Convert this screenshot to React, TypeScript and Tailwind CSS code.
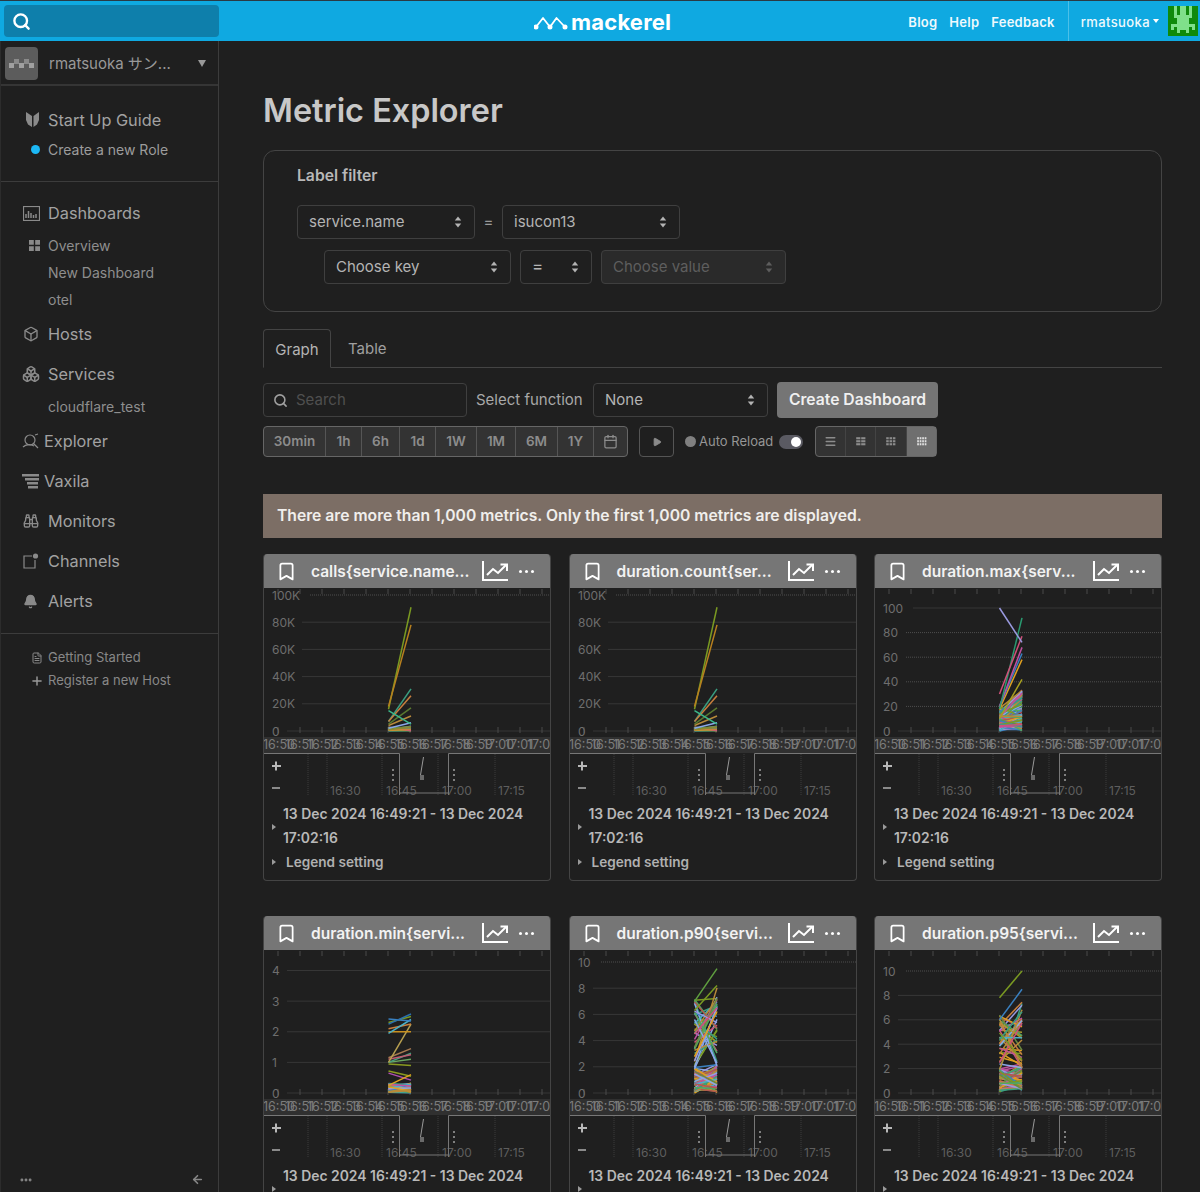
import { Search, Box, Boxes, Binoculars, Bell, Plus, FileText, Calendar, Play, Bookmark, Ellipsis, ArrowLeft, Menu } from "lucide-react"
import type { ReactNode } from "react"

type Line = [number, number, string]

const palette = ["#3a9e80", "#c87f3e", "#7a9a22", "#b88a3a", "#8aa8e8", "#a89a30", "#d0507a", "#3a80c0", "#c050a0", "#e0a020", "#4ab0c8", "#6a8a40", "#b05a50", "#9a9ae0", "#50a860"]

// small seeded generator so the charts look the same on every load
function band(seed: number, count: number, lowMax: number, highMax: number, lowMin = 0, highMin = 0): Line[] {
  let s = seed
  const next = () => {
    s = (s * 1103515245 + 12345) % 2147483648
    return s / 2147483648
  }
  const out: Line[] = []
  for (let i = 0; i < count; i++) {
    next()
    const low = lowMin + next() * (lowMax - lowMin)
    const high = highMin + next() * (highMax - highMin)
    out.push([low, high, palette[Math.floor(next() * palette.length)]])
  }
  return out
}

const callsLines: Line[] = [
  ...band(5, 16, 3, 4),
  [1, 3, "#8a8a30"],
  [2, 6, "#8aa8e8"],
  [4, 11, "#b88a3a"],
  [5, 17, "#5a7a30"],
  [7, 31, "#3a9e80"],
  [7, 26, "#c87f3e"],
  [15, 5, "#3cb88a"],
  [16, 91, "#7a9a22"],
  [18, 78, "#b8801f"],
]

const maxLines: Line[] = [
  ...band(7, 60, 20, 36),
  ...band(9, 50, 12, 14),
  [10, 42, "#a8a020"],
  [18, 58, "#e0a020"],
  [20, 63, "#3a80c0"],
  [20, 68, "#c050a0"],
  [18, 92, "#2a9a70"],
  [30, 77, "#d0507a"],
  [100, 72, "#9a9ae0"],
]

const minLines: Line[] = [
  ...band(11, 45, 0.32, 0.32),
  [0.72, 0.55, "#8a9a20"],
  [0.65, 0.42, "#b050b0"],
  [0.25, 0.6, "#e0a020"],
  [0.95, 0.9, "#8a9a20"],
  [1.0, 1.1, "#6aa860"],
  [1.0, 1.3, "#4aa080"],
  [1.1, 1.25, "#c05a70"],
  [1.15, 1.45, "#a87a50"],
  [1.0, 2.25, "#b8a050"],
  [2.0, 2.0, "#c89020"],
  [2.1, 2.25, "#c87f3e"],
  [1.95, 2.4, "#4ab0c8"],
  [2.3, 2.5, "#7a9a22"],
  [2.42, 2.35, "#3a80c0"],
  [2.25, 2.58, "#2a70b0"],
]

const p90Lines: Line[] = [
  ...band(23, 60, 2, 2.2),
  ...band(31, 34, 7.2, 8.2, 1.8, 2),
  [4.5, 6.5, "#d0507a"],
  [6.3, 8.2, "#7a9a22"],
  [7, 9.5, "#60a040"],
]

const p95Lines: Line[] = [
  ...band(41, 60, 2, 2.4),
  ...band(53, 34, 6.4, 7.6, 1.8, 2),
  [6, 8.5, "#3a80c0"],
  [7.8, 10, "#7a9a22"],
]

const cards = [
  { title: "calls{service.name...", ticks: ["100K", "80K", "60K", "40K", "20K", "0"], top: 7, scale: 100, lines: callsLines },
  { title: "duration.count{ser...", ticks: ["100K", "80K", "60K", "40K", "20K", "0"], top: 7, scale: 100, lines: callsLines },
  { title: "duration.max{serv...", ticks: ["100", "80", "60", "40", "20", "0"], top: 20, scale: 100, lines: maxLines },
  { title: "duration.min{servi...", ticks: ["4", "3", "2", "1", "0"], top: 20.5, scale: 4, lines: minLines },
  { title: "duration.p90{servi...", ticks: ["10", "8", "6", "4", "2", "0"], top: 12, scale: 10, lines: p90Lines },
  { title: "duration.p95{servi...", ticks: ["10", "8", "6", "4", "2", "0"], top: 21, scale: 10, lines: p95Lines },
]

const axisLabels = ["16:50", "16:51", "16:52", "16:53", "16:54", "16:55", "16:56", "16:57", "16:58", "16:59", "17:00", "17:01", "17:02"]

function UpDown({ className = "" }: { className?: string }) {
  return (
    <svg width="8" height="12" viewBox="0 0 8 12" className={className} fill="currentColor">
      <path d="M4 0.5 7.2 4.6H0.8Z" />
      <path d="M4 11.5 0.8 7.4H7.2Z" />
    </svg>
  )
}

function Select({ label, className = "", disabled = false }: { label: string; className?: string; disabled?: boolean }) {
  return (
    <div className={`flex items-center justify-between h-[34px] pl-[11px] pr-3 rounded border border-[#3f3f3f] text-[15px] ${disabled ? "bg-[#2a2a2a] text-[#5e5e5e]" : "text-[#b4b4b4]"} ${className}`}>
      <span>{label}</span>
      <UpDown className={disabled ? "text-[#5e5e5e]" : "text-[#b4b4b4]"} />
    </div>
  )
}

function DotGrid({ cols, rows }: { cols: number; rows: number }) {
  const cells = []
  for (let y = 0; y < rows; y++) {
    for (let x = 0; x < cols; x++) {
      const w = 10 / cols
      const h = 9 / rows
      cells.push(<rect key={`${x}-${y}`} x={x * w + 0.2} y={y * h + 0.2} width={w - 0.8} height={h - 0.9} />)
    }
  }
  return (
    <svg width="10" height="9" viewBox="0 0 10 9" fill="currentColor">
      {cells}
    </svg>
  )
}

function DotGridBig() {
  return (
    <svg width="11" height="11" viewBox="0 0 11 11" fill="#8a8a8a">
      <path d="M0 0h4.800v4.800H0ZM6.200 0H11v4.800H6.200ZM0 6.200h4.800V11H0ZM6.200 6.200H11V11H6.200Z" />
    </svg>
  )
}

function NavItem({ icon, label, iconBox = "w-[47px] pl-[22px]" }: { icon: ReactNode; label: string; iconBox?: string }) {
  return (
    <div className="flex items-center h-[24px] text-[16.3px] text-[#a2a2a2]">
      <div className={`${iconBox} shrink-0 flex items-center`}>{icon}</div>
      <span>{label}</span>
    </div>
  )
}

function SubItem({ label }: { label: string }) {
  return <div className="h-[27px] flex items-center pl-[47px] text-[14px] text-[#8e8e8e]">{label}</div>
}

function Chart({ ticks, top, scale, lines }: { ticks: string[]; top: number; scale: number; lines: Line[] }) {
  const base = 143
  const step = (base - top) / (ticks.length - 1)
  const yOf = (v: number) => base - (v / scale) * (base - top)
  const xTicks = Array.from({ length: 13 }, (_, i) => 15 + i * 22)
  return (
    <svg width="288" height="210" viewBox="0 0 288 210" className="block">
      {xTicks.map((x) => (
        <g key={x} stroke="#4a4a4a">
          <line x1={x} x2={x} y1={1} y2={6} />
          <line x1={x} x2={x} y1={base - 4} y2={base + 2} />
        </g>
      ))}
      {ticks.map((t, i) => {
        const y = top + i * step
        return (
          <g key={t}>
            <line x1={17 + t.length * 7.5} x2={287} y1={y} y2={y} stroke="#4e4e4e" strokeDasharray="1 1" />
            <text x={9} y={y + 4.5} fontSize="12" fill="#6e6e6e">
              {t}
            </text>
          </g>
        )
      })}
      {lines.map((l, i) => (
        <line key={i} x1={125.5} x2={148} y1={yOf(l[0])} y2={yOf(l[1])} stroke={l[2]} strokeWidth="1.5" />
      ))}
      <rect x="0.5" y="149" width="287" height="16" fill="#303030" />
      {axisLabels.map((t, i) => (
        <text key={t} x={i * 22} y={160.5} fontSize="12.5" fill="#7c7c7c">
          {t}
        </text>
      ))}
      <path d="M0.5 0V165.5H136.5M185.5 165.5H287.5V0" fill="none" stroke="#777" />
      {/* range navigator under the chart */}
      <path d="M9 178h9M13 173.5v9" stroke="#b8b8b8" strokeWidth="2" />
      <path d="M9 200h8" stroke="#8a8a8a" strokeWidth="2" />
      {[45, 64, 119, 175, 232].map((x) => (
        <line key={x} x1={x} x2={x} y1={166} y2={207} stroke="#3c3c3c" strokeDasharray="1 1" />
      ))}
      <text x="67" y="206.500" fontSize="12" fill="#5e5e5e">16:30</text>
      <text x="123" y="206.500" fontSize="12" fill="#5e5e5e">16:45</text>
      <text x="179" y="206.500" fontSize="12" fill="#5e5e5e">17:00</text>
      <text x="235" y="206.500" fontSize="12" fill="#5e5e5e">17:15</text>
      <path d="M136.500 165.500V207M185.500 165.500V207M136.500 205H185.500" stroke="#777" fill="none" />
      <path d="M160.500 169 157.500 187" stroke="#9a9a9a" fill="none" strokeWidth="1" />
      <rect x="157" y="187" width="4" height="5" fill="#6a6a6a" />
      <g fill="#a0a0a0">
        <circle cx="130" cy="182" r="1" />
        <circle cx="130" cy="187" r="1" />
        <circle cx="130" cy="192" r="1" />
        <circle cx="191" cy="182" r="1" />
        <circle cx="191" cy="187" r="1" />
        <circle cx="191" cy="192" r="1" />
      </g>
    </svg>
  )
}

function MetricCard({ card }: { card: (typeof cards)[number] }) {
  return (
    <div className="h-[327px] rounded border border-[#444] border-t-0 overflow-hidden">
      <div className="h-[34px] bg-[#767676] flex items-center text-white -mx-px">
        <Bookmark size={21} strokeWidth={2} className="ml-[13px] shrink-0" />
        <span className="ml-[14px] pt-px w-[170px] shrink-0 whitespace-nowrap text-[15.5px] font-semibold text-[#f2f2f2]">{card.title}</span>
        <svg width="27" height="22" viewBox="0 0 27 22" fill="none" stroke="white" strokeWidth="2" className="ml-px shrink-0">
          <path d="M1 1v19h25" />
          <path d="M5 15l6-6 5 4 8-8" />
          <path d="M18.500 4.500H25V11" />
        </svg>
        <div className="ml-[10px] flex gap-[3px]">
          <span className="w-[3px] h-[3px] rounded-full bg-white" />
          <span className="w-[3px] h-[3px] rounded-full bg-white" />
          <span className="w-[3px] h-[3px] rounded-full bg-white" />
        </div>
      </div>
      <div className="-mx-px">
        <Chart ticks={card.ticks} top={card.top} scale={card.scale} lines={card.lines} />
      </div>
      <div className="flex items-center mt-[5px] pl-[8px]">
        <span className="w-0 h-0 border-y-[3px] border-y-transparent border-l-[4px] border-l-[#9a9a9a] shrink-0" />
        <div className="pl-[7px] pr-3 text-[13.9px] leading-[23.5px] font-semibold text-[#b8b8b8]">13 Dec 2024 16:49:21 - 13 Dec 2024 17:02:16</div>
      </div>
      <div className="flex items-center pl-[8px] h-[24px]">
        <span className="w-0 h-0 border-y-[3px] border-y-transparent border-l-[4px] border-l-[#9a9a9a]" />
        <span className="ml-[10px] text-[13.6px] font-semibold text-[#b0b0b0]">Legend setting</span>
      </div>
    </div>
  )
}

export default function App() {
  return (
    <div className="h-[1192px] overflow-hidden flex flex-col bg-[#1f1f1f] font-['Inter',sans-serif]">
      <header className="h-[41px] shrink-0 bg-[#0fa9e1] border-t border-[#2a3a44] flex items-center relative">
        <div className="absolute left-[4px] top-[4px] w-[215px] h-[32px] rounded bg-[#0e7fab] flex items-center pl-[8px]">
          <Search size={19} strokeWidth={3} className="text-white" />
        </div>
        <div className="absolute left-[534px] top-[8px] flex items-center">
          <svg width="36" height="16" viewBox="0 0 36 16" fill="none" stroke="white" strokeWidth="1.8" strokeLinejoin="round">
            <path d="M2 13 9 4l7 9 6.5-9L31 13" />
            <circle cx="2" cy="13" r="1.6" fill="white" />
            <circle cx="16" cy="13" r="1.6" fill="white" />
            <circle cx="31" cy="13" r="1.6" fill="white" />
          </svg>
          <span className="ml-[1px] text-[22px] leading-[26px] font-bold text-white tracking-[0.2px]">mackerel</span>
        </div>
        <nav className="ml-auto flex items-center h-full text-[13px] font-semibold text-[#eef9fd] tracking-[0.25px]">
          <span className="pt-[3px]">Blog</span>
          <span className="ml-[12px] pt-[3px]">Help</span>
          <span className="ml-[12px] pt-[3px]">Feedback</span>
          <div className="ml-[13px] h-full border-l border-[#4cc0e8] flex items-center pl-[12px] pr-[2px]">
            <span className="pt-[4px] font-medium tracking-[0.4px]">rmatsuoka</span>
            <span className="ml-[3px] w-0 h-0 border-x-[3px] border-x-transparent border-t-[4px] border-t-white" />
            <svg width="30" height="30" viewBox="0 0 10 10" className="ml-[9px]" shapeRendering="crispEdges">
              <rect width="10" height="10" fill="#0f8a0b" />
              <path d="M2 0h1v3h1V0h2v3h1V0h1v4H7v2h2v2H8V7H7v2H6V8H4v1H3V7H2v1H1V6h2V4H2Z" fill="#7fe08a" />
            </svg>
          </div>
        </nav>
      </header>

      <div className="flex flex-1 min-h-0">
        <aside className="w-[219px] shrink-0 border-r border-[#3c3c3c] border-l border-l-[#2c2c2c] flex flex-col">
          <div className="h-[45px] shrink-0 border-b-2 border-[#353535] flex items-center pt-[2px] pl-[4px] pr-[12px]">
            <svg width="33" height="33" viewBox="0 0 33 33" className="shrink-0 rounded-sm">
              <rect width="33" height="33" fill="#5c5c5c" />
              <path d="M4 16h5v5H4ZM14 16h5v5h-5ZM24 16h5v5h-5Z" fill="#a0a0a0" />
              <path d="M9 12h5v5H9ZM19 12h5v5h-5Z" fill="#8a8a8a" />
            </svg>
            <span className="ml-[11px] pt-[2px] text-[15px] text-[#999] whitespace-nowrap font-['Inter','Noto_Sans_CJK_JP',sans-serif]">rmatsuoka サン...</span>
            <span className="ml-auto w-0 h-0 border-x-[4px] border-x-transparent border-t-[7px] border-t-[#999]" />
          </div>

          <div className="h-[96px] shrink-0 border-b border-[#3c3c3c] pt-[22px]">
            <NavItem
              label="Start Up Guide"
              icon={
                <svg width="15" height="18" viewBox="0 0 15 18" className="ml-[2px]" fill="#8a8a8a">
                  <path d="M1 1 7 5v11L3 13.5 1 9ZM14 1 8.5 5v11l3.5-2.5L14 9Z" />
                </svg>
              }
            />
            <div className="flex items-center h-[27px] mt-[4px] pl-[30px] text-[14px] text-[#9c9c9c]">
              <span className="w-[9px] h-[9px] rounded-full bg-[#1cb8f5]" />
              <span className="ml-[8px]">Create a new Role</span>
            </div>
          </div>

          <div className="pt-[19px] h-[452px] shrink-0 border-b border-[#3c3c3c] flex flex-col">
            <NavItem
              label="Dashboards"
              icon={
                <svg width="17" height="15" viewBox="0 0 17 15" fill="none" stroke="#8a8a8a">
                  <rect x="0.5" y="0.5" width="16" height="14" strokeWidth="1.2" />
                  <path d="M3 12V8M5.500 12V5M8 12V7M10.500 12V9M13 12V8" strokeWidth="1.5" />
                </svg>
              }
            />
            <div className="h-[7px]" />
            <div className="h-[27px] flex items-center pl-[28px] text-[14px] text-[#8e8e8e]">
              <DotGridBig />
              <span className="ml-[8px]">Overview</span>
            </div>
            <SubItem label="New Dashboard" />
            <SubItem label="otel" />
            <div className="h-[9px]" />
            <NavItem label="Hosts" icon={<Box size={16} className="text-[#8a8a8a]" />} />
            <div className="h-[16px]" />
            <NavItem label="Services" icon={<Boxes size={18} className="text-[#8a8a8a] -ml-px" />} />
            <div className="h-[7px]" />
            <SubItem label="cloudflare_test" />
            <div className="h-[9px]" />
            <NavItem
              iconBox="w-[43px] pl-[21px]"
              label="Explorer"
              icon={
                <svg width="17" height="17" viewBox="0 0 17 17" fill="none" stroke="#8a8a8a" strokeWidth="1.2">
                  <circle cx="8" cy="7" r="5" />
                  <path d="M11.500 10.500 16 15M1 14c3-3 8-3 11-1M13 2l3-1" />
                </svg>
              }
            />
            <div className="h-[16px]" />
            <NavItem
              iconBox="w-[43px] pl-[21px]"
              label="Vaxila"
              icon={
                <svg width="17" height="15" viewBox="0 0 17 15" fill="#8a8a8a">
                  <path d="M0 0h17v2.500H0ZM3 4h14v2.500H3ZM5 8h11v2.500H5ZM6 12h10v2.500H6Z" />
                </svg>
              }
            />
            <div className="h-[16px]" />
            <NavItem label="Monitors" icon={<Binoculars size={16} className="text-[#8a8a8a]" />} />
            <div className="h-[16px]" />
            <NavItem
              label="Channels"
              icon={
                <svg width="16" height="16" viewBox="0 0 16 16" fill="none" stroke="#8a8a8a" strokeWidth="1.2">
                  <path d="M9 3H1v12h11V7" />
                  <circle cx="12.500" cy="3" r="2.600" fill="#8a8a8a" stroke="none" />
                </svg>
              }
            />
            <div className="h-[16px]" />
            <NavItem label="Alerts" icon={<Bell size={15} fill="#8a8a8a" className="text-[#8a8a8a]" />} />
          </div>

          <div className="pt-[12px] pl-[29px] text-[13px] text-[#888]">
            <div className="flex items-center h-[23px]">
              <FileText size={12} className="ml-px" />
              <span className="ml-[5px]">Getting Started</span>
            </div>
            <div className="flex items-center h-[23px]">
              <Plus size={14} strokeWidth={2.5} className="text-[#999]" />
              <span className="ml-[4px]">Register a new Host</span>
            </div>
          </div>

          <div className="mt-auto h-[19px] flex items-start justify-between pl-[18px] pr-[14px] text-[#888]">
            <Ellipsis size={14} strokeWidth={3} />
            <ArrowLeft size={13} strokeWidth={3} />
          </div>
        </aside>

        <main className="flex-1 min-w-0 overflow-hidden pl-[44px] pr-[38px]">
          <h1 className="mt-[49px] h-[42px] leading-[42px] text-[32.4px] font-semibold text-[#c8c8c8]">Metric Explorer</h1>

          <section className="mt-[18px] h-[162px] rounded-xl border border-[#444] pl-[33px] pt-[16px]">
            <div className="text-[15.7px] leading-[18px] font-semibold text-[#b8b8b8]">Label filter</div>
            <div className="mt-[20px] flex items-center">
              <Select label="service.name" className="w-[178px]" />
              <span className="w-[27px] text-center text-[15px] text-[#999]">=</span>
              <Select label="isucon13" className="w-[178px]" />
            </div>
            <div className="mt-[11px] ml-[27px] flex items-center gap-[9px]">
              <Select label="Choose key" className="w-[187px]" />
              <Select label="=" className="w-[72px] text-[17px]" />
              <Select label="Choose value" className="w-[185px]" disabled />
            </div>
          </section>

          <div className="mt-[17px] h-[39px] border-b border-[#444] flex">
            <div className="w-[68px] h-[39px] pt-[3px] flex items-center justify-center text-[15px] text-[#b4b4b4] border border-[#444] border-b-[#1f1f1f] rounded-t">Graph</div>
            <div className="ml-[17px] pt-[3px] flex items-center text-[15px] text-[#a0a0a0]">Table</div>
          </div>

          <div className="mt-[14px] flex items-center">
            <div className="w-[204px] h-[34px] rounded border border-[#3f3f3f] flex items-center pl-[9px] text-[15px] text-[#4f4f4f]">
              <Search size={15} strokeWidth={2.5} className="text-[#a0a0a0]" />
              <span className="ml-[8px]">Search</span>
            </div>
            <span className="ml-[9px] w-[117px] text-[15px] text-[#a8a8a8] whitespace-nowrap">Select function</span>
            <Select label="None" className="w-[175px]" />
            <div className="ml-[9px] w-[161px] h-[36px] rounded bg-[#757575] flex items-center justify-center text-[15.7px] font-semibold text-[#f0f0f0]">Create Dashboard</div>
          </div>

          <div className="mt-[8px] flex items-center h-[31px]">
            <div className="h-[31px] w-[365px] rounded border border-[#666] bg-[#333] flex text-[13.5px] font-semibold text-[#8c8c8c]">
              {["30min", "1h", "6h", "1d", "1W", "1M", "6M", "1Y"].map((t, i) => (
                <div key={t} className={`h-full border-r border-[#555] flex items-center justify-center ${["w-[62px]", "w-[36px]", "w-[38px]", "w-[36px]", "w-[41px]", "w-[39px]", "w-[42px]", "w-[36px]"][i]}`}>
                  {t}
                </div>
              ))}
              <div className="flex-1 flex items-center justify-center">
                <Calendar size={15} />
              </div>
            </div>
            <div className="ml-[11px] w-[35px] h-[31px] rounded border border-[#555] flex items-center justify-center">
              <Play size={10} fill="#8a8a8a" className="text-[#8a8a8a]" />
            </div>
            <span className="ml-[11px] w-[11px] h-[11px] rounded-full bg-[#808080]" />
            <span className="ml-[3px] text-[13px] text-[#969696]">Auto Reload</span>
            <div className="ml-[6px] w-[24px] h-[14px] rounded-full bg-[#5a5a62] flex items-center justify-end pr-[2px]">
              <span className="w-[10px] h-[10px] rounded-full bg-white" />
            </div>
            <div className="ml-[12px] w-[122px] h-[31px] rounded border border-[#666] bg-[#333] flex text-[#8c8c8c]">
              <div className="w-[30px] flex items-center justify-center border-r border-[#444]">
                <Menu size={13} strokeWidth={2.5} />
              </div>
              <div className="w-[30px] flex items-center justify-center border-r border-[#444]">
                <DotGrid cols={2} rows={3} />
              </div>
              <div className="w-[31px] flex items-center justify-center border-r border-[#444]">
                <DotGrid cols={3} rows={3} />
              </div>
              <div className="flex-1 flex items-center justify-center bg-[#6f6f6f] text-[#e0e0e0]">
                <DotGrid cols={4} rows={3} />
              </div>
            </div>
          </div>

          <div className="mt-[37px] h-[44px] bg-[#7c6e65] flex items-center pl-[14px] text-[15.7px] font-semibold text-[#f0eeec]">There are more than 1,000 metrics. Only the first 1,000 metrics are displayed.</div>

          <div className="mt-[16px] grid grid-cols-3 gap-x-[17.5px] gap-y-[35px]">
            {cards.map((card) => (
              <MetricCard key={card.title} card={card} />
            ))}
          </div>
        </main>
      </div>
    </div>
  )
}
